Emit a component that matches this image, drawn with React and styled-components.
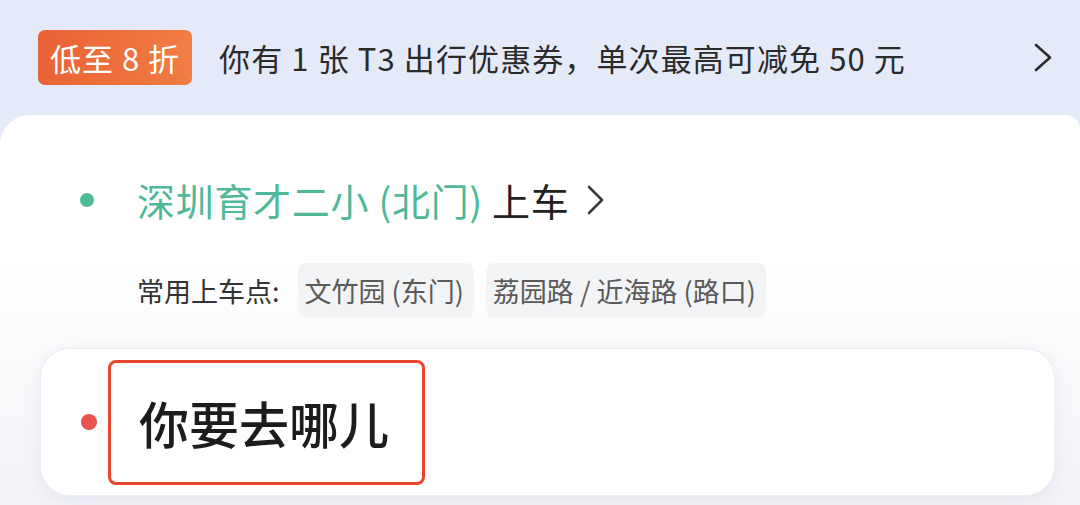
import React from "react"
import styled, { createGlobalStyle } from "styled-components"

const GlobalStyle = createGlobalStyle`
  html, body {
    margin: 0;
    padding: 0;
    background: #e5eaf8;
  }
  body {
    font-family: "Noto Sans CJK SC", "Noto Sans", sans-serif;
  }
`

const Page = styled.div`
  width: 1080px;
  height: 505px;
  overflow: hidden;
  background: #e5eaf8;
  display: flex;
  flex-direction: column;
`

const Banner = styled.div`
  height: 115px;
  flex-shrink: 0;
  display: flex;
  align-items: center;
  padding: 0 28px 0 38px;
  box-sizing: border-box;
`

const Badge = styled.span`
  height: 55px;
  padding: 0 12px;
  border-radius: 7px;
  background: linear-gradient(90deg, #ea6235, #f17d44);
  color: #fff;
  font-size: 31px;
  letter-spacing: 1px;
  line-height: 55px;
  white-space: nowrap;
`

const BannerText = styled.span`
  margin-left: 27px;
  font-size: 31px;
  letter-spacing: 1.1px;
  line-height: 40px;
  color: #2b2b2b;
  white-space: nowrap;
`

const Spacer = styled.div`
  flex: 1;
`

const Chevron = styled.svg`
  flex-shrink: 0;
  margin-left: ${(p) => p.$gap || 0}px;
`

const Card = styled.div`
  flex: 1;
  border-radius: 30px 14px 0 0;
  background: linear-gradient(180deg, #ffffff 0%, #ffffff 35%, #f3f4f8 100%);
  padding-top: 60px;
  display: flex;
  flex-direction: column;
`

const PickupRow = styled.div`
  height: 50px;
  display: flex;
  align-items: center;
  padding-left: 80px;
`

const Dot = styled.span`
  width: ${(p) => p.$size}px;
  height: ${(p) => p.$size}px;
  border-radius: 50%;
  background: ${(p) => p.$color};
  flex-shrink: 0;
`

const PickupText = styled.span`
  margin-left: 43px;
  font-size: 38px;
  letter-spacing: 0.7px;
  line-height: 50px;
  color: #222;
  white-space: nowrap;
`

const Place = styled.span`
  color: #4fb899;
`

const CommonRow = styled.div`
  margin-top: 38px;
  height: 55px;
  display: flex;
  align-items: center;
  padding-left: 137px;
  gap: 12px;
`

const CommonLabel = styled.span`
  font-size: 27px;
  color: #333;
  margin-right: 6px;
  white-space: nowrap;
`

const Chip = styled.span`
  height: 55px;
  padding: 0 10px 0 7px;
  border-radius: 8px;
  background: #f3f4f6;
  color: #5a5a5a;
  font-size: 27px;
  line-height: 55px;
  white-space: nowrap;
`

const InputCard = styled.div`
  margin: 30px 25px 0 40px;
  height: 148px;
  box-sizing: border-box;
  border-radius: 30px;
  background: #fff;
  border: 1px solid #eceef4;
  box-shadow: 0 4px 18px rgba(120, 128, 170, 0.12);
  display: flex;
  align-items: center;
  padding-left: 40px;
`

const Highlight = styled.div`
  margin-left: 11px;
  height: 125px;
  box-sizing: border-box;
  border: 3px solid #e8472d;
  border-radius: 8px;
  display: flex;
  align-items: center;
  padding: 0 33px 0 28px;
`

const Destination = styled.span`
  font-size: 50px;
  font-weight: 500;
  line-height: 60px;
  color: #1c1c1c;
  white-space: nowrap;
`

const ChevronIcon = ({ width, height, stroke, gap }) => (
  <Chevron $gap={gap} width={width} height={height} viewBox={`0 0 ${width} ${height}`}>
    <polyline
      points={`2,2 ${width - 2},${height / 2} 2,${height - 2}`}
      fill="none"
      stroke={stroke}
      strokeWidth="2.6"
      strokeLinecap="round"
      strokeLinejoin="round"
    />
  </Chevron>
)

export default function App() {
  const spots = ["文竹园 (东门)", "荔园路 / 近海路 (路口)"]

  return (
    <>
      <GlobalStyle />
      <Page>
        <Banner>
          <Badge>低至 8 折</Badge>
          <BannerText>你有 1 张 T3 出行优惠券，单次最高可减免 50 元</BannerText>
          <Spacer />
          <ChevronIcon width={18} height={29} stroke="#2b2b2b" />
        </Banner>
        <Card>
          <PickupRow>
            <Dot $size={14} $color="#4dba96" />
            <PickupText>
              <Place>深圳育才二小 (北门)</Place> 上车
            </PickupText>
            <ChevronIcon width={17} height={30} stroke="#3a3a3a" gap={17} />
          </PickupRow>
          <CommonRow>
            <CommonLabel>常用上车点:</CommonLabel>
            {spots.map((s) => (
              <Chip key={s}>{s}</Chip>
            ))}
          </CommonRow>
          <InputCard>
            <Dot $size={16} $color="#e8524f" />
            <Highlight>
              <Destination>你要去哪儿</Destination>
            </Highlight>
          </InputCard>
        </Card>
      </Page>
    </>
  )
}
